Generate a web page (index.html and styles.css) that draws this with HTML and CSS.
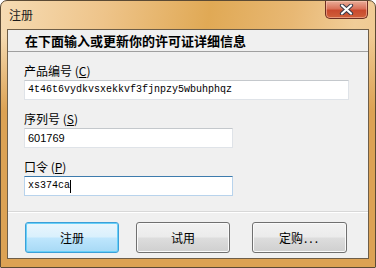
FILE: index.html
```html
<!DOCTYPE html>
<html lang="zh">
<head>
<meta charset="utf-8">
<title>注册</title>
<link rel="stylesheet" href="styles.css">
</head>
<body>
<div class="window">
  <div class="titlebar">
    <span class="title">注册</span>
    <button class="close" aria-label="关闭">
      <svg width="17" height="11" viewBox="0 0 17 11">
        <path d="M4 1.5 L13 9.5 M13 1.5 L4 9.5" stroke="#3a3a48" stroke-width="4.2" stroke-linecap="round"/>
        <path d="M4 1.5 L13 9.5 M13 1.5 L4 9.5" stroke="#ffffff" stroke-width="2.2" stroke-linecap="round"/>
      </svg>
    </button>
  </div>
  <div class="client">
    <div class="header">在下面输入或更新你的许可证详细信息</div>
    <div class="body">
      <div class="field">
        <label class="label">产品编号 (<u>C</u>)</label>
        <div class="input wide mono">4t46t6vydkvsxekkvf3fjnpzy5wbuhphqz</div>
      </div>
      <div class="field">
        <label class="label">序列号 (<u>S</u>)</label>
        <div class="input narrow sans">601769</div>
      </div>
      <div class="field">
        <label class="label">口令 (<u>P</u>)</label>
        <div class="input narrow mono focused">xs374ca<span class="caret"></span></div>
      </div>
    </div>
    <div class="buttons">
      <button class="btn default">注册</button>
      <button class="btn">试用</button>
      <button class="btn third">定购<span class="dots">...</span></button>
    </div>
  </div>
</div>
</body>
</html>
```
FILE: styles.css
```css
html, body {
  margin: 0;
  padding: 0;
  background: #ffffff;
}
.window {
  width: 376px;
  height: 268px;
  box-sizing: border-box;
  border: 1px solid #5b4a34;
  border-radius: 7px 7px 1px 1px;
  padding: 0 6px 8px 6px;
  display: flex;
  flex-direction: column;
  font-family: "Noto Sans CJK SC", "Liberation Sans", sans-serif;
  background:
    linear-gradient(to bottom, rgba(220,162,84,0) 0px, rgba(220,162,84,0) 35px, rgba(220,162,84,1) 110px),
    linear-gradient(100deg, #f6dcb4 0%, #eec48a 25%, #e0a955 50%, #e8b874 70%, #f1cd98 85%, #eec489 100%);
}
.titlebar {
  height: 28px;
  display: flex;
  justify-content: space-between;
  align-items: flex-start;
}
.title {
  font-size: 12px;
  line-height: 14px;
  color: #1c1c1c;
  margin-top: 7px;
  margin-left: 2px;
}
.close {
  width: 43px;
  height: 18px;
  margin: 0 1px 0 0;
  padding: 0;
  border: 1px solid #6d2e22;
  border-top: none;
  border-radius: 0 0 5px 5px;
  background: linear-gradient(to bottom, #e9ad98 0%, #d9725a 45%, #c94a2e 55%, #d0603a 100%);
  box-shadow: inset 0 0 0 1px rgba(255,210,190,0.5);
  display: flex;
  align-items: center;
  justify-content: center;
}
.client {
  flex: 1;
  border: 1px solid #6e5e48;
  background: #f0f0f0;
  display: flex;
  flex-direction: column;
}
.header {
  height: 21px;
  border-bottom: 1px solid #a0a0a0;
  padding-left: 17px;
  font-size: 13px;
  font-weight: bold;
  line-height: 21px;
  color: #000000;
}
.body {
  flex: 1;
  padding: 12px 0 0 16px;
  display: flex;
  flex-direction: column;
  gap: 12px;
}
.field {
  display: flex;
  flex-direction: column;
  gap: 2px;
}
.label {
  font-size: 12px;
  line-height: 14px;
  height: 14px;
  color: #000000;
}
.label u {
  text-decoration-thickness: 1px;
  text-underline-offset: 1px;
}
.input {
  height: 20px;
  box-sizing: border-box;
  background: #ffffff;
  border: 1px solid #dfe3e8;
  border-top-color: #c4c8cc;
  padding-left: 3px;
  line-height: 18px;
  color: #000000;
  white-space: nowrap;
  display: flex;
  align-items: center;
}
.wide { width: 325px; }
.narrow { width: 209px; }
.mono {
  font-family: "Liberation Mono", monospace;
  font-size: 10px;
}
.sans {
  font-family: "Liberation Sans", sans-serif;
  font-size: 11px;
}
.focused {
  border-color: #b8d3ec;
  border-top-color: #3d7bad;
}
.caret {
  display: inline-block;
  width: 1px;
  height: 13px;
  background: #000000;
}
.buttons {
  height: 47px;
  box-sizing: border-box;
  border-top: 1px solid #d8d8d8;
  box-shadow: inset 0 1px 0 #ffffff;
  padding: 10px 0 0 17px;
  display: flex;
  gap: 17px;
  align-items: flex-start;
}
.btn {
  width: 94px;
  height: 31px;
  margin: 0;
  padding: 0;
  border: 1px solid #707070;
  border-radius: 3px;
  background: linear-gradient(to bottom, #f2f2f2 0%, #ebebeb 48%, #dddddd 52%, #cfcfcf 100%);
  box-shadow: inset 0 0 0 1px #fafafa;
  font-family: "Noto Sans CJK SC", "Liberation Sans", sans-serif;
  font-size: 12px;
  line-height: 14px;
  color: #000000;
}
.btn.default {
  border-color: #3c9fd8;
  background: linear-gradient(to bottom, #eaf6fd 0%, #d9f0fc 48%, #bee6fd 52%, #a7d9f5 100%);
  box-shadow: inset 0 0 0 1px #68d0f8;
}
.btn.third {
  width: 95px;
  margin-left: 5px;
}
.dots {
  letter-spacing: 2px;
  margin-left: 1px;
}
```
